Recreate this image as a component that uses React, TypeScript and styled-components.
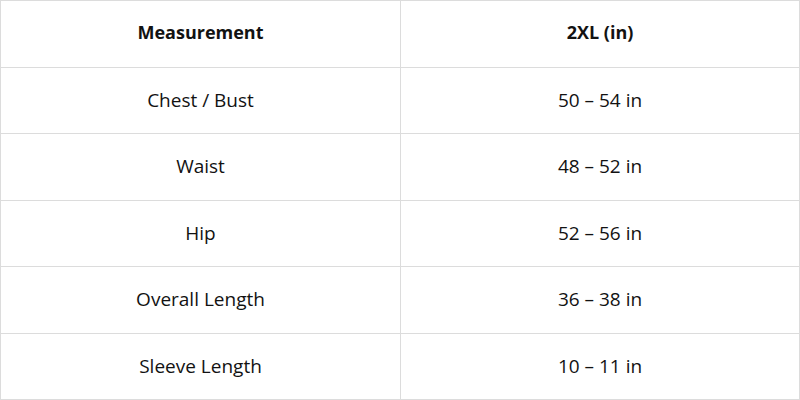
import React from "react";
import styled, { createGlobalStyle } from "styled-components";

const Global = createGlobalStyle`
  html, body { margin: 0; padding: 0; background: #fff; }
  body { font-family: "Open Sans", "Noto Sans", Arial, sans-serif; color: #111; }
`;

const Table = styled.div`
  box-sizing: border-box;
  width: 800px;
  height: 400px;
  display: grid;
  grid-template-columns: 400px 1fr;
  grid-template-rows: repeat(6, 1fr);
  border-top: 1px solid #dcdcdc;
  border-left: 1px solid #dcdcdc;
`;

const Cell = styled.div<{ $head?: boolean }>`
  display: flex;
  align-items: center;
  justify-content: center;
  border-right: 1.5px solid #dcdcdc;
  border-bottom: 1.5px solid #dcdcdc;
  font-size: ${(p) => (p.$head ? "18px" : "19px")};
  font-weight: ${(p) => (p.$head ? 700 : 400)};
  color: #121212;
  padding-bottom: ${(p) => (p.$head ? "3px" : "1px")};
`;

const rows: [string, string][] = [
  ["Chest / Bust", "50 – 54 in"],
  ["Waist", "48 – 52 in"],
  ["Hip", "52 – 56 in"],
  ["Overall Length", "36 – 38 in"],
  ["Sleeve Length", "10 – 11 in"],
];

export default function App() {
  return (
    <>
      <Global />
      <Table>
        <Cell $head>Measurement</Cell>
        <Cell $head>2XL (in)</Cell>
        {rows.map(([a, b]) => (
          <React.Fragment key={a}>
            <Cell>{a}</Cell>
            <Cell>{b}</Cell>
          </React.Fragment>
        ))}
      </Table>
    </>
  );
}
